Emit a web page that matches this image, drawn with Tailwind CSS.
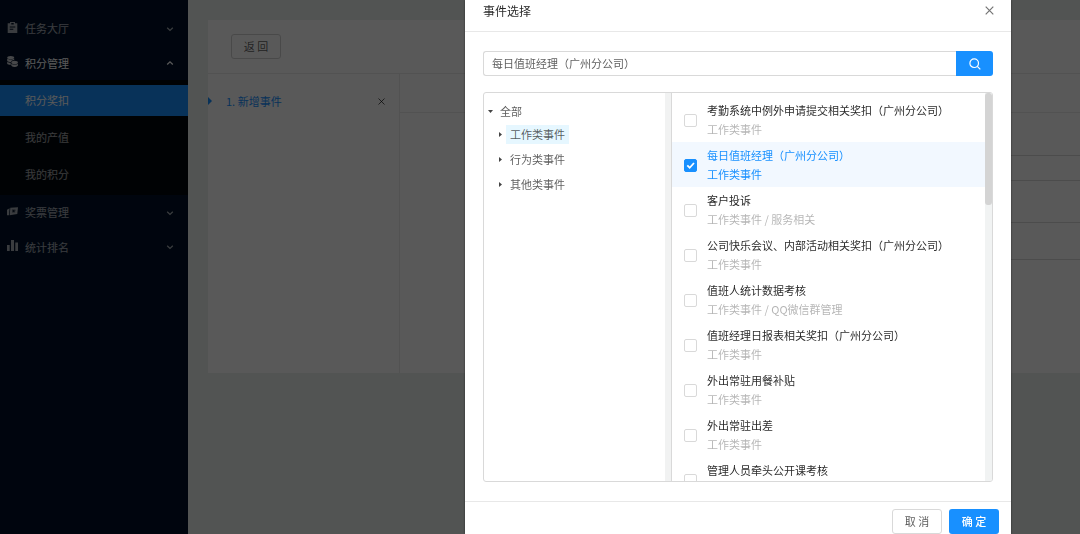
<!DOCTYPE html>
<html lang="zh-CN">
<head>
<meta charset="utf-8">
<meta name="viewport" content="width=device-width, initial-scale=1">
<title>事件选择</title>
<script src="https://cdn.jsdelivr.net/npm/@tailwindcss/browser@4"></script>
</head>
<body class="h-screen overflow-hidden bg-[#ebf0ee] font-['Noto_Sans_CJK_SC',sans-serif] text-[11px] text-black/65">
<div class="flex h-full">
  <!-- Sidebar -->
  <nav class="w-[188px] shrink-0 bg-[#001128] pt-[11px] text-white/65">
    <a href="#" class="flex h-[35px] items-center pl-[7px] pr-[14px]">
      <svg class="mb-[3px] size-[11px]" viewBox="0 0 11 11" fill="currentColor"><path fill-rule="evenodd" d="M.7 1.300H3V0h5v1.300h2.300V11H.7zM4.300.9v1.500h2.400V.9zM2.700 4.500v1h5.600v-1zm0 2.300v1h3.600v-1z"/></svg>
      <span class="ml-[7px] flex-1">任务大厅</span>
      <svg class="size-2" viewBox="0 0 8 8" fill="none" stroke="currentColor" stroke-width="1.3"><path d="M1.2 2.8 4 5.4 6.8 2.8"/></svg>
    </a>
    <a href="#" class="flex h-[34px] items-center pl-[7px] pr-[14px] text-white">
      <svg class="mb-[3px] size-[11px]" viewBox="0 0 11 11" fill="currentColor" fill-opacity=".8"><ellipse cx="3.700" cy="1.600" rx="3.500" ry="1.600"/><path d="M.2 2.600c1.500 1.300 5.500 1.300 7 0v1.500c-1.900.1-3 .8-3.200 1.900C2.500 6 1 5.600.2 4.900zM.2 5.700c.8.6 2 1 3.500 1v2.200C2 8.900.6 8.400.2 7.700z"/><ellipse cx="7.600" cy="6.400" rx="3.300" ry="1.600"/><path d="M4.300 7.700c1.600 1.200 5 1.200 6.600 0v1.900c-.8 1.900-5.800 1.900-6.600 0z"/></svg>
      <span class="ml-[7px] flex-1">积分管理</span>
      <svg class="size-2" viewBox="0 0 8 8" fill="none" stroke="currentColor" stroke-width="1.3"><path d="M1.2 5.4 4 2.8 6.8 5.4"/></svg>
    </a>
    <div class="flex flex-col gap-[6px] bg-[#00060e] py-[5px]">
      <a href="#" class="flex h-[31px] items-center bg-[#1890ff] pl-[25px] text-white">积分奖扣</a>
      <a href="#" class="flex h-[31px] items-center pl-[25px]">我的产值</a>
      <a href="#" class="flex h-[31px] items-center pl-[25px]">我的积分</a>
    </div>
    <a href="#" class="flex h-[35px] items-center pl-[7px] pr-[14px]">
      <svg class="mb-[3px] size-[11px]" viewBox="0 0 11 11" fill="currentColor"><path fill-rule="evenodd" d="M3.300 1.800 11 1.300 10.300 8 2.700 9.300zM5 3.800v.8h1.200v.8H5v.8h3.200v-.8H7.200v-.8h1.300v-.8z"/><path d="M0 3.800 2.600 2.300 2 9.300H0z"/></svg>
      <span class="ml-[7px] flex-1">奖票管理</span>
      <svg class="size-2" viewBox="0 0 8 8" fill="none" stroke="currentColor" stroke-width="1.3"><path d="M1.2 2.8 4 5.4 6.8 2.8"/></svg>
    </a>
    <a href="#" class="flex h-[34px] items-center pl-[7px] pr-[14px]">
      <svg class="mb-[3px] size-[11px]" viewBox="0 0 11 11" fill="currentColor"><path d="M0 5h2.700v6H0zM4 0h3v11H4zM8.300 2.500H11V11H8.300z"/></svg>
      <span class="ml-[7px] flex-1">统计排名</span>
      <svg class="size-2" viewBox="0 0 8 8" fill="none" stroke="currentColor" stroke-width="1.3"><path d="M1.2 2.8 4 5.4 6.8 2.8"/></svg>
    </a>
  </nav>

  <!-- Page content -->
  <main class="min-w-0 flex-1 pl-5 pt-5">
    <section class="bg-white">
      <div class="flex h-[54px] items-center border-b border-[#eaeaea] pl-[23px]">
        <button class="h-[25px] w-[50px] rounded-[3px] border border-[#d2d2d2]">返 回</button>
      </div>
      <div class="flex h-[299px]">
        <div class="w-[192px] shrink-0 border-r border-[#eaeaea] pt-[17px]">
          <div class="flex h-5 items-center text-[#1890ff]">
            <svg class="h-2 w-1" viewBox="0 0 4 8" fill="currentColor"><path d="M0 0 4 4 0 8z"/></svg>
            <a href="#" class="ml-[14px] flex-1">1. 新增事件</a>
            <button aria-label="删除" class="mr-[14px] text-black/65"><svg class="size-[7px]" viewBox="0 0 7 7" stroke="currentColor"><path d="M.5.5 6.500 6.500M6.500.5.5 6.500"/></svg></button>
          </div>
        </div>
        <div class="min-w-0 flex-1">
          <div class="h-[39px] border-b border-[#eaeaea]"></div>
          <div class="ml-20">
            <div class="h-[43px] border-b border-[#dadada]"></div>
            <div class="h-[25px] border-b border-[#dadada]"></div>
            <div class="h-[42px] border-b border-[#dadada]"></div>
            <div class="h-[37px] border-b border-[#dadada]"></div>
          </div>
        </div>
      </div>
    </section>
  </main>
</div>

<!-- Dialog over the page -->
<div class="fixed inset-0 flex bg-black/65 pl-[465px] pr-[69px]">
  <div role="dialog" aria-labelledby="dlg" class="flex min-w-0 flex-1 flex-col bg-white shadow-[0_0_2px_#0008]">
    <header class="flex h-8 shrink-0 items-center justify-between border-b border-[#e8e8e8] pb-[10px] pl-[18px] pr-[17px]">
      <h2 id="dlg" class="text-xs text-black/85">事件选择</h2>
      <button aria-label="关闭" class="text-black/55"><svg class="size-[9px]" viewBox="0 0 9 9" stroke="currentColor" stroke-width="1.2"><path d="M.7.7 8.300 8.300M8.300.7.7 8.300"/></svg></button>
    </header>

    <div class="px-[18px] pb-[19px] pt-[19px]">
      <form class="flex h-[25px]">
        <input type="text" aria-label="搜索事件" value="每日值班经理（广州分公司）" class="min-w-0 flex-1 rounded-l-[3px] border border-r-0 border-[#d9d9d9] px-2">
        <button type="button" aria-label="搜索" class="flex w-[37px] items-center justify-center rounded-r-[3px] bg-[#1890ff] text-white"><svg class="size-3" viewBox="0 0 12 12" fill="none" stroke="currentColor" stroke-width="1.2"><circle cx="5.200" cy="5.200" r="4.300"/><path d="m8.300 8.300 3 3"/></svg></button>
      </form>

      <div class="mt-4 flex h-[390px] overflow-hidden rounded-[3px] border border-[#d9d9d9]">
        <div class="flex w-[188px] shrink-0 border-r border-[#d9d9d9]">
          <div class="flex-1 pt-[9px]">
            <div class="flex h-[19px] items-center pl-1">
              <svg class="h-[3px] w-[5px]" viewBox="0 0 5 3"><path d="M0 0h5L2.500 3z" fill="#444"/></svg>
              <span class="ml-[7px]">全部</span>
            </div>
            <ul class="mt-1 flex flex-col gap-[6px] pl-[15px]">
              <li class="flex h-[19px] items-center"><svg class="h-[5px] w-[3px]" viewBox="0 0 3 5"><path d="M0 0 3 2.500 0 5z" fill="#444"/></svg><span class="ml-1 bg-[#e6f7ff] px-1 leading-[19px]">工作类事件</span></li>
              <li class="flex h-[19px] items-center"><svg class="h-[5px] w-[3px]" viewBox="0 0 3 5"><path d="M0 0 3 2.500 0 5z" fill="#444"/></svg><span class="ml-1 px-1 leading-[19px]">行为类事件</span></li>
              <li class="flex h-[19px] items-center"><svg class="h-[5px] w-[3px]" viewBox="0 0 3 5"><path d="M0 0 3 2.500 0 5z" fill="#444"/></svg><span class="ml-1 px-1 leading-[19px]">其他类事件</span></li>
            </ul>
          </div>
          <div class="w-[6px] bg-[#f1f2f2]"></div>
        </div>

        <ul id="list" class="min-w-0 flex-1 overflow-hidden pt-1"></ul>
        <div class="w-[7px] bg-[#f1f3f3]"><div class="h-[112px] rounded-[3px] bg-[#d4d4d4]"></div></div>
      </div>
    </div>

    <footer class="flex shrink-0 justify-end gap-[7px] border-t border-[#e8e8e8] pr-3 pt-[7px]">
      <button class="h-[25px] w-[50px] rounded-[3px] border border-[#d9d9d9]">取 消</button>
      <button class="h-[25px] w-[50px] rounded-[3px] bg-[#1890ff] font-medium text-white">确 定</button>
    </footer>
  </div>
</div>

<template id="row">
  <li class="group has-checked:bg-[#f2f8ff]">
    <label class="flex h-[45px] items-center pl-3 pt-px">
      <span class="grid size-[13px] shrink-0">
        <input type="checkbox" class="peer col-start-1 row-start-1 size-[13px] appearance-none rounded-[2px] border border-[#d9d9d9] bg-white checked:border-[#1890ff] checked:bg-[#1890ff]">
        <svg class="pointer-events-none invisible col-start-1 row-start-1 size-[13px] peer-checked:visible" viewBox="0 0 13 13" fill="none" stroke="#fff" stroke-width="1.800"><path d="m3.300 6.300 2.400 2.500 4.300-4.800"/></svg>
      </span>
      <span class="ml-[10px] leading-[19px]">
        <span data-name class="block text-black/85 group-has-checked:text-[#1890ff]"></span>
        <span data-kind class="block h-[19px] text-black/30 group-has-checked:text-[#1890ff]"></span>
      </span>
    </label>
  </li>
</template>
<script>
const events = [
  ['考勤系统中例外申请提交相关奖扣（广州分公司）', '工作类事件'],
  ['每日值班经理（广州分公司）', '工作类事件', true],
  ['客户投诉', '工作类事件 / 服务相关'],
  ['公司快乐会议、内部活动相关奖扣（广州分公司）', '工作类事件'],
  ['值班人统计数据考核', '工作类事件 / QQ微信群管理'],
  ['值班经理日报表相关奖扣（广州分公司）', '工作类事件'],
  ['外出常驻用餐补贴', '工作类事件'],
  ['外出常驻出差', '工作类事件'],
  ['管理人员牵头公开课考核', ''],
];
const list = document.getElementById('list');
const row = document.getElementById('row');
for (const [name, kind, checked] of events) {
  const item = row.content.cloneNode(true);
  item.querySelector('[data-name]').textContent = name;
  item.querySelector('[data-kind]').textContent = kind;
  item.querySelector('input').checked = !!checked;
  list.append(item);
}
</script>
</body>
</html>
